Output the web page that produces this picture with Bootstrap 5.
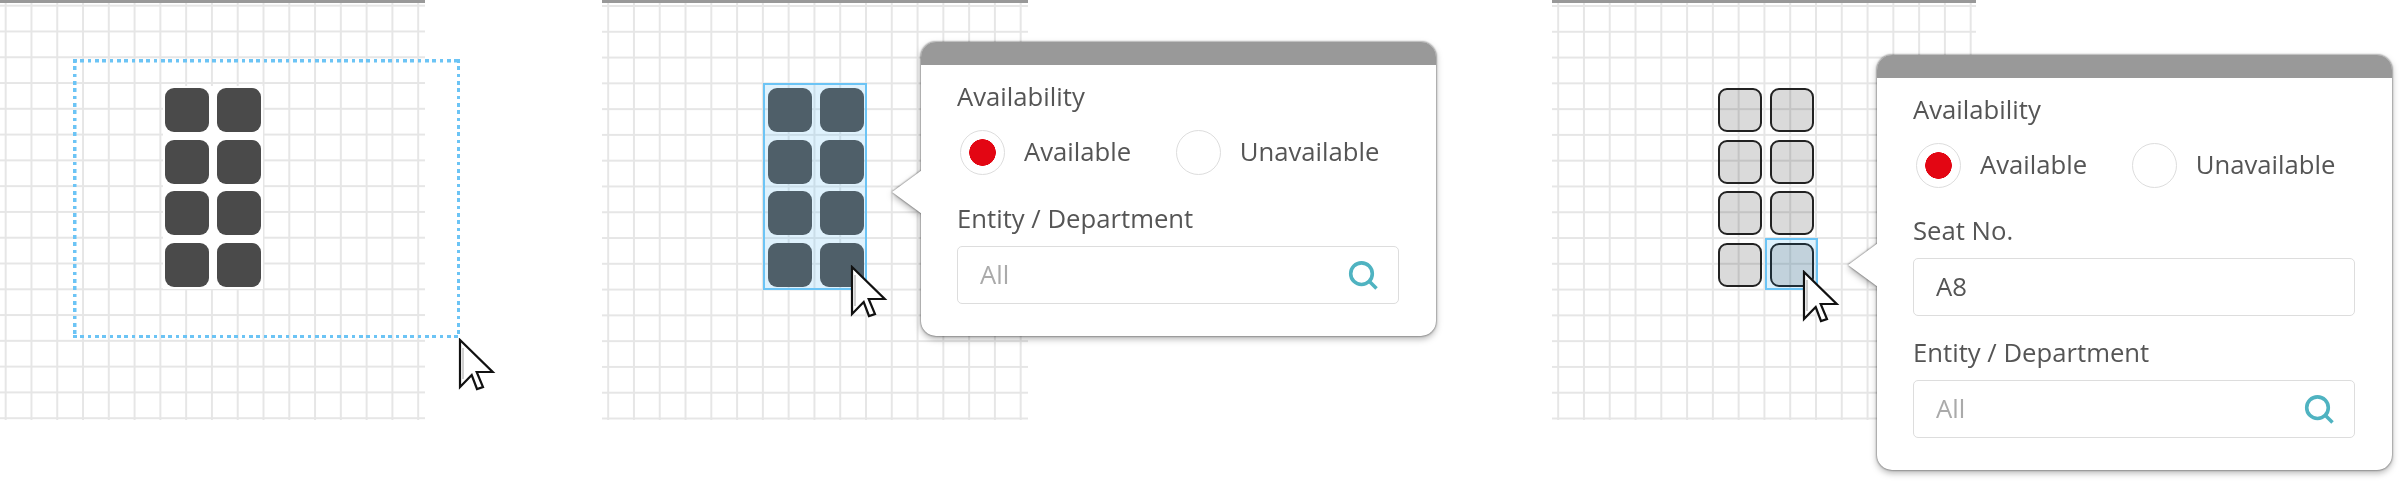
<!DOCTYPE html>
<html lang="en">
<head>
  <meta charset="UTF-8">
  <meta name="viewport" content="width=device-width, initial-scale=1.0">
  <title>Seat editor</title>
  <link href="https://cdn.jsdelivr.net/npm/bootstrap@5.3.0/dist/css/bootstrap.min.css" rel="stylesheet">
  <style>
    body {
      background-color: #fff;
      margin: 0;
      min-height: 484px;
      font-family: "Open Sans", "Noto Sans", sans-serif;
      color: #555;
    }

    /* grid canvas */
    .canvas-panel {
      position: relative;
      flex: none;
      width: 426px;
      height: 420px;
      border-top: 3px solid #999;
      padding-top: 80px;
      background-image:
        linear-gradient(90deg, #e6e6e6 2px, transparent 2px),
        linear-gradient(#e6e6e6 2px, transparent 2px);
      background-size: 25.79px 25.79px;
      background-position: 5.2px 2px;
    }
    .panel-one { width: 425px; padding-left: 163px; padding-top: 83.3px; background-position: 4.7px 1.7px; }
    .panel-two { margin-left: 177px; padding-left: 161.3px; }
    .panel-three { margin-left: 524px; width: 424px; padding-left: 166.3px; padding-top: 85.3px; }

    /* seats */
    .seat-block {
      display: grid;
      grid-template-columns: 44px 44px;
      grid-auto-rows: 44px;
      gap: 7.6px;
      width: max-content;
    }
    .seat-plain { background-color: #fff; padding: 2px; }
    .seat-block-selected {
      background-color: rgba(108, 196, 245, .22);
      border: 2px solid #6cc4f5;
      padding: 3px 1px 1.4px 2.7px;
    }
    .seat { border-radius: 9px; background-color: #4a4a4a; }
    .seat-block-selected .seat { background-color: #4f5f69; }
    .seat-outline {
      position: relative;
      background-color: rgba(0, 0, 0, .145);
      border: 2px solid #222;
    }
    .seat-active { background-color: rgba(0, 0, 0, .13); border-color: #1f2d36; }
    .seat-active::before {
      content: "";
      position: absolute;
      inset: -7px -6.3px -5px -7px;
      background-color: rgba(108, 196, 245, .22);
      border: 2px solid #6cc4f5;
      z-index: -1;
    }
    .seat-grid-iso { isolation: isolate; }

    /* drag marquee */
    .marquee {
      position: absolute;
      left: 73px;
      top: 56px;
      width: 387px;
      height: 279px;
      background:
        repeating-linear-gradient(90deg, #6cc4f5 0 3.7px, transparent 3.7px 7.33px) 0 0 / 100% 3.5px no-repeat,
        repeating-linear-gradient(90deg, #6cc4f5 0 3.7px, transparent 3.7px 7.33px) 0 100% / 100% 3.5px no-repeat,
        repeating-linear-gradient(#6cc4f5 0 3.7px, transparent 3.7px 7.33px) 0 0 / 3.5px 100% no-repeat,
        repeating-linear-gradient(#6cc4f5 0 3.7px, transparent 3.7px 7.33px) 100% 0 / 3.5px 100% no-repeat;
    }

    .cursor-arrow { position: absolute; width: 38px; height: 56px; }
    .cursor-one { left: 458px; top: 335px; }
    .cursor-two { left: 248.3px; top: 261.7px; }
    .cursor-three { left: 250px; top: 266.7px; }

    /* popover card */
    .seat-pop {
      position: absolute;
      width: 515px;
      border: 0;
      border-radius: 15px;
      background-color: #fff;
      color: #555;
      filter: drop-shadow(0 0 1px rgba(0, 0, 0, .65)) drop-shadow(0 3px 3px rgba(0, 0, 0, .28));
    }
    .pop-two { left: 319px; top: 39px; }
    .pop-three { left: 325px; top: 52px; }
    .seat-pop::before {
      content: "";
      position: absolute;
      left: -29px;
      width: 30px;
      height: 44px;
      background-color: #fff;
      clip-path: polygon(0 50%, 100% 0, 100% 100%);
    }
    .pop-two::before { top: 128px; }
    .pop-three::before { top: 188px; }
    .seat-pop .card-header {
      height: 22.5px;
      padding: 0;
      background-color: #999;
      border: 0;
      border-radius: 15px 15px 0 0;
    }
    .seat-pop .card-body { padding: 15.3px 37px 32px 36px; }

    .field-label { font-size: 25.7px; line-height: 34px; margin-bottom: 9.7px; display: block; }
    .avail-label { margin-bottom: 16.2px; }
    .radio-row { gap: 44.5px; margin-bottom: 27.2px; padding-left: 3px; }
    .pop-three .radio-row { margin-bottom: 26.2px; }

    .seat-radio.form-check {
      display: flex;
      align-items: center;
      gap: 19px;
      min-height: 45px;
      margin: 0;
      padding: 0;
      font-size: 25.7px;
      line-height: 34px;
    }
    .seat-radio .form-check-input[type=radio] {
      float: none;
      flex: none;
      width: 45px;
      height: 45px;
      margin: 0;
      background-color: #fff;
      border: 1.5px solid #ddd;
      box-shadow: none;
    }
    .seat-radio .form-check-input:checked[type=radio] {
      background-image: radial-gradient(circle, #e30613 0 13px, transparent 13.6px);
      background-size: 100% 100%;
    }
    .seat-radio .form-check-label { opacity: 1; color: #555; }

    .field-input.form-control {
      height: 58px;
      padding: 0 50px 0 22px;
      font-size: 25.7px;
      color: #555;
      border: 1.5px solid #ddd;
      border-radius: 5px;
      background-color: #fff;
      box-shadow: none;
    }
    .field-input.form-control::placeholder { color: #aaa; opacity: 1; }
    .search-field { position: relative; }
    .search-field svg { position: absolute; right: 20px; top: 13px; width: 32px; height: 32px; }
    .seat-field { margin-bottom: 20.3px; }
  </style>
</head>
<body>

  <svg width="0" height="0" class="d-block position-absolute">
    <symbol id="arrowCursor" viewBox="-2 -2 38 56">
      <path d="M0 0V47L11.7 35 17 49 23 47 16.7 32H32.7Z" fill="#fff" stroke="#111" stroke-width="2.2" stroke-linejoin="miter"/>
      <path d="M3 8V39" stroke="#cfcfcf" stroke-width="2" fill="none"/>
    </symbol>
    <symbol id="searchGlass" viewBox="0 0 32 32">
      <circle cx="14.5" cy="14.7" r="10.8" fill="none" stroke="#4fb3c1" stroke-width="3.6"/>
      <path d="M23 23 29.5 29.5" stroke="#4fb3c1" stroke-width="3.6" fill="none"/>
    </symbol>
  </svg>

  <div class="d-flex align-items-start">

    <!-- drag selection -->
    <div class="canvas-panel panel-one">
      <div class="seat-block seat-plain">
        <div class="seat"></div><div class="seat"></div>
        <div class="seat"></div><div class="seat"></div>
        <div class="seat"></div><div class="seat"></div>
        <div class="seat"></div><div class="seat"></div>
      </div>
      <div class="marquee"></div>
      <svg class="cursor-arrow cursor-one"><use href="#arrowCursor"/></svg>
    </div>

    <!-- group selected -->
    <div class="canvas-panel panel-two">
      <div class="seat-block seat-block-selected">
        <div class="seat"></div><div class="seat"></div>
        <div class="seat"></div><div class="seat"></div>
        <div class="seat"></div><div class="seat"></div>
        <div class="seat"></div><div class="seat"></div>
      </div>
      <svg class="cursor-arrow cursor-two"><use href="#arrowCursor"/></svg>

      <div class="card seat-pop pop-two">
        <div class="card-header"></div>
        <div class="card-body">
          <span class="field-label avail-label">Availability</span>
          <div class="d-flex radio-row">
            <div class="form-check seat-radio">
              <input class="form-check-input" type="radio" name="availTwo" id="availTwoYes" checked>
              <label class="form-check-label" for="availTwoYes">Available</label>
            </div>
            <div class="form-check seat-radio">
              <input class="form-check-input" type="radio" name="availTwo" id="availTwoNo">
              <label class="form-check-label" for="availTwoNo">Unavailable</label>
            </div>
          </div>
          <label class="field-label" for="entityTwo">Entity / Department</label>
          <div class="search-field">
            <input id="entityTwo" type="text" class="form-control field-input" placeholder="All">
            <svg><use href="#searchGlass"/></svg>
          </div>
        </div>
      </div>
    </div>

    <!-- single seat selected -->
    <div class="canvas-panel panel-three">
      <div class="seat-block seat-grid-iso">
        <div class="seat seat-outline"></div><div class="seat seat-outline"></div>
        <div class="seat seat-outline"></div><div class="seat seat-outline"></div>
        <div class="seat seat-outline"></div><div class="seat seat-outline"></div>
        <div class="seat seat-outline"></div><div class="seat seat-outline seat-active"></div>
      </div>
      <svg class="cursor-arrow cursor-three"><use href="#arrowCursor"/></svg>

      <div class="card seat-pop pop-three">
        <div class="card-header"></div>
        <div class="card-body">
          <span class="field-label avail-label">Availability</span>
          <div class="d-flex radio-row">
            <div class="form-check seat-radio">
              <input class="form-check-input" type="radio" name="availThree" id="availThreeYes" checked>
              <label class="form-check-label" for="availThreeYes">Available</label>
            </div>
            <div class="form-check seat-radio">
              <input class="form-check-input" type="radio" name="availThree" id="availThreeNo">
              <label class="form-check-label" for="availThreeNo">Unavailable</label>
            </div>
          </div>
          <label class="field-label" for="seatNo">Seat No.</label>
          <input id="seatNo" type="text" class="form-control field-input seat-field" value="A8">
          <label class="field-label" for="entityThree">Entity / Department</label>
          <div class="search-field">
            <input id="entityThree" type="text" class="form-control field-input" placeholder="All">
            <svg><use href="#searchGlass"/></svg>
          </div>
        </div>
      </div>
    </div>

  </div>

  <script src="https://cdn.jsdelivr.net/npm/bootstrap@5.3.0/dist/js/bootstrap.bundle.min.js"></script>
</body>
</html>
